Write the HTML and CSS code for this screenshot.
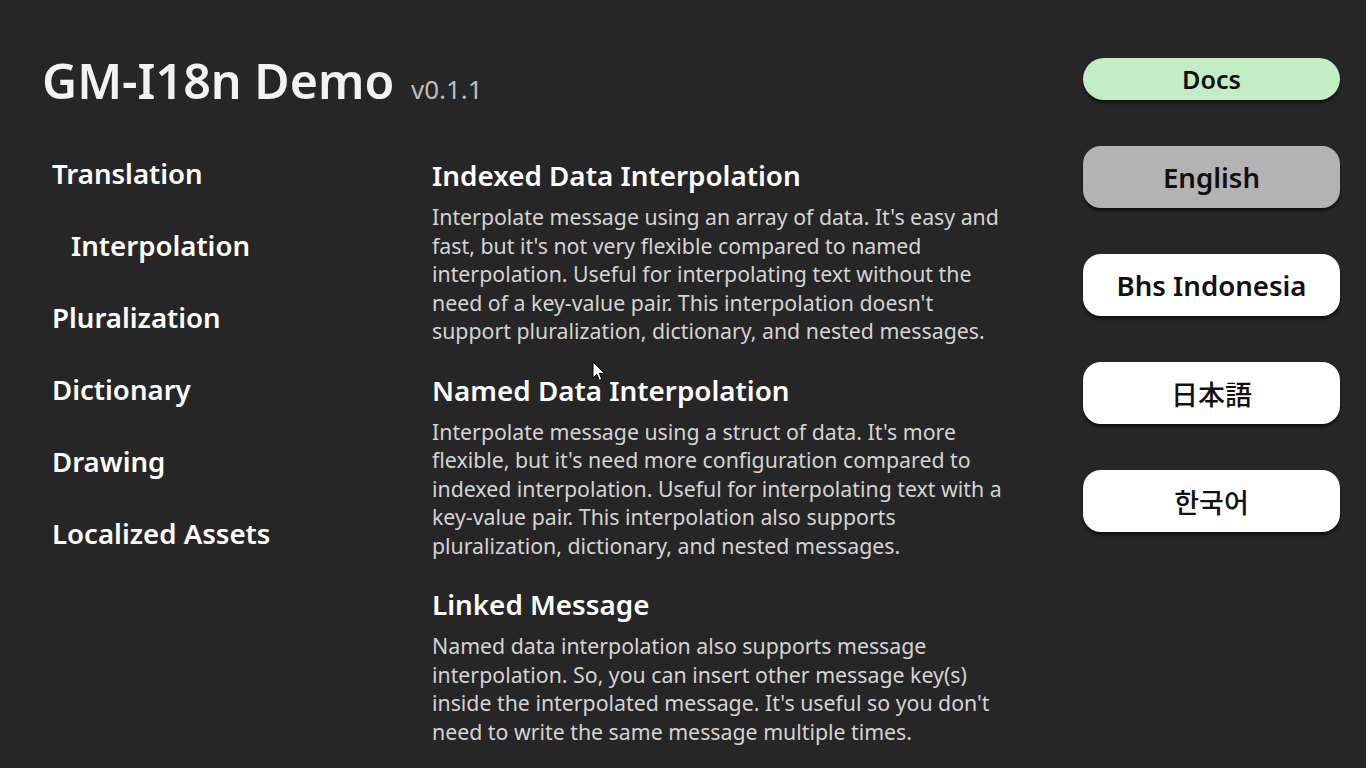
FILE: index.html
```html
<!DOCTYPE html>
<html lang="en">
<head>
  <meta charset="UTF-8">
  <meta name="viewport" content="width=device-width, initial-scale=1.0">
  <title>GM-I18n Demo</title>
  <link rel="stylesheet" href="styles.css">
</head>
<body>

  <div class="page">
    <div class="main">
      <header class="title">
        GM-I18n Demo <span class="version">v0.1.1</span>
      </header>

      <div class="body">
        <!-- Demo menu -->
        <ul class="nav">
          <li>Translation</li>
          <li class="sub">Interpolation</li>
          <li>Pluralization</li>
          <li>Dictionary</li>
          <li>Drawing</li>
          <li>Localized Assets</li>
        </ul>

        <div class="content">
          <section class="topic">
            <h2>Indexed Data Interpolation</h2>
            <p>Interpolate message using an array of data. It's easy and fast, but it's not very flexible compared to named interpolation. Useful for interpolating text without the need of a key-value pair. This interpolation doesn't support pluralization, dictionary, and nested messages.</p>
          </section>
          <section class="topic">
            <h2>Named Data Interpolation</h2>
            <p>Interpolate message using a struct of data. It's more flexible, but it's need more configuration compared to indexed interpolation. Useful for interpolating text with a key-value pair. This interpolation also supports pluralization, dictionary, and nested messages.</p>
          </section>
          <section class="topic">
            <h2>Linked Message</h2>
            <p>Named data interpolation also supports message interpolation. So, you can insert other message key(s) inside the interpolated message. It's useful so you don't need to write the same message multiple times.</p>
          </section>
        </div>
      </div>
    </div>

    <!-- Docs link and locale switcher -->
    <div class="side">
      <button class="btn docs">Docs</button>
      <button class="btn active">English</button>
      <button class="btn">Bhs Indonesia</button>
      <button class="btn cjk" lang="ja">日本語</button>
      <button class="btn cjk" lang="ko">한국어</button>
    </div>
  </div>

  <svg class="cursor" width="14" height="21" viewBox="0 0 14 21">
    <path d="M1 1 L1 17 L4.8 13.3 L7.3 19.3 L9.8 18.3 L7.3 12.3 L12.5 12.3 Z" fill="#fff" stroke="#000" stroke-width="1"/>
  </svg>

</body>
</html>
```

FILE: styles.css
```css
body {
  font-family: "Noto Sans", "Open Sans", sans-serif;
  margin: 0;
  padding: 0;
  background-color: #262626;
  color: #fff;
  overflow: hidden;
}

.page {
  display: flex;
  justify-content: space-between;
  height: 768px;
}

.main {
  flex: 1;
}

.title {
  margin-top: 49px;
  padding-left: 42px;
  font-size: 48.4px;
  font-weight: 600;
  line-height: 62px;
  color: #f2f2f2;
}

.version {
  margin-left: 4px;
  font-size: 26px;
  font-weight: 400;
  color: #bdbdbd;
}

.body {
  display: flex;
  margin-top: 17px;
}

.nav {
  width: 432px;
  margin: 0;
  padding: 0 0 0 52px;
  list-style: none;
  box-sizing: border-box;
}

.nav li {
  font-size: 27.6px;
  font-weight: 600;
  line-height: 72px;
}

.nav .sub {
  padding-left: 19px;
}

.content {
  width: 585px;
  padding-top: 20px;
}

.topic {
  margin-bottom: 26px;
}

.topic h2 {
  margin: 0 0 10px;
  font-size: 27.8px;
  font-weight: 600;
  line-height: 36px;
}

.topic p {
  margin: 0;
  font-size: 21.3px;
  line-height: 28.5px;
  color: #d4d4d4;
}

.side {
  display: flex;
  flex-direction: column;
  gap: 46px;
  width: 257px;
  margin: 58px 26px 0 0;
}

.btn {
  height: 62px;
  border: none;
  border-radius: 18px;
  background-color: #fff;
  color: #111;
  font-family: inherit;
  font-size: 27.6px;
  font-weight: 600;
  box-shadow: 0 3px 3px rgba(0, 0, 0, 0.55);
  cursor: pointer;
}

.docs {
  height: 42px;
  border-radius: 21px;
  background-color: #c3edc5;
  font-size: 25.2px;
}

.active {
  background-color: #b3b3b3;
}

.cjk {
  font-family: "Noto Sans CJK JP", "Noto Sans CJK KR", sans-serif;
  font-size: 27px;
  font-weight: 500;
}

.cjk:lang(ko) {
  font-family: "Noto Sans CJK KR", sans-serif;
}

.cursor {
  position: absolute;
  left: 592px;
  top: 361px;
}
```
